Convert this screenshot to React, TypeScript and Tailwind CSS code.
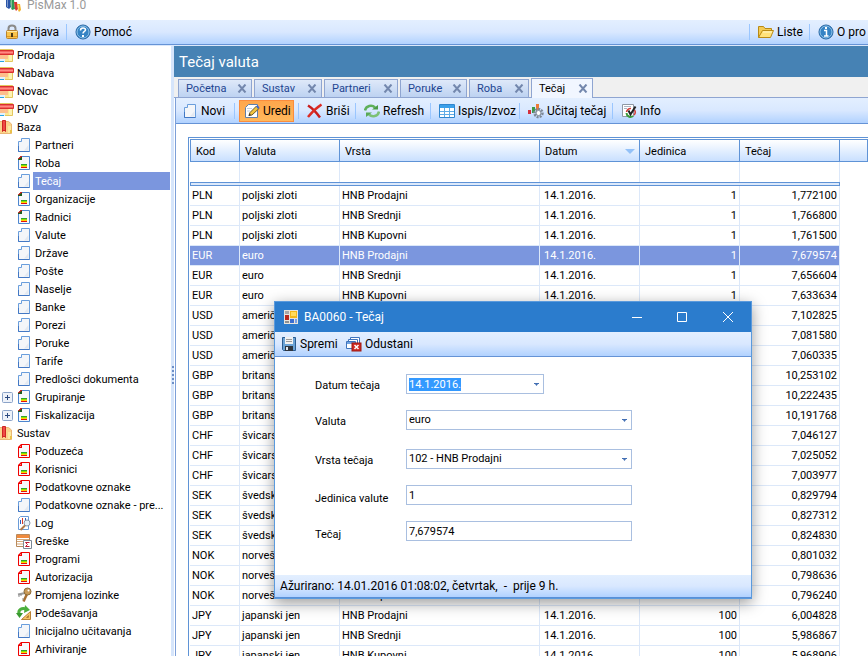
import { useEffect, useRef, useState } from "react";
import type { ReactNode } from "react";
import clsx from "clsx";

type IconKind =
  | "folder"
  | "book"
  | "page"
  | "form"
  | "formRed"
  | "log"
  | "errors"
  | "keys"
  | "settings";

interface TreeItem {
  label: string;
  icon: IconKind;
  level?: number;
  expandable?: boolean;
}

interface Rate {
  code: string;
  currency: string;
  kind: string;
  unit: number;
  value: string;
}

const TREE: TreeItem[] = [
  { label: "Prodaja", icon: "folder" },
  { label: "Nabava", icon: "folder" },
  { label: "Novac", icon: "folder" },
  { label: "PDV", icon: "folder" },
  { label: "Baza", icon: "book" },
  { label: "Partneri", icon: "page", level: 1 },
  { label: "Roba", icon: "form", level: 1 },
  { label: "Tečaj", icon: "page", level: 1 },
  { label: "Organizacije", icon: "form", level: 1 },
  { label: "Radnici", icon: "form", level: 1 },
  { label: "Valute", icon: "page", level: 1 },
  { label: "Države", icon: "page", level: 1 },
  { label: "Pošte", icon: "page", level: 1 },
  { label: "Naselje", icon: "page", level: 1 },
  { label: "Banke", icon: "page", level: 1 },
  { label: "Porezi", icon: "page", level: 1 },
  { label: "Poruke", icon: "page", level: 1 },
  { label: "Tarife", icon: "page", level: 1 },
  { label: "Predlošci dokumenta", icon: "page", level: 1 },
  { label: "Grupiranje", icon: "form", level: 1, expandable: true },
  { label: "Fiskalizacija", icon: "form", level: 1, expandable: true },
  { label: "Sustav", icon: "book" },
  { label: "Poduzeća", icon: "formRed", level: 1 },
  { label: "Korisnici", icon: "formRed", level: 1 },
  { label: "Podatkovne oznake", icon: "formRed", level: 1 },
  { label: "Podatkovne oznake - pre...", icon: "page", level: 1 },
  { label: "Log", icon: "log", level: 1 },
  { label: "Greške", icon: "errors", level: 1 },
  { label: "Programi", icon: "formRed", level: 1 },
  { label: "Autorizacija", icon: "formRed", level: 1 },
  { label: "Promjena lozinke", icon: "keys", level: 1 },
  { label: "Podešavanja", icon: "settings", level: 1 },
  { label: "Inicijalno učitavanja", icon: "page", level: 1 },
  { label: "Arhiviranje", icon: "formRed", level: 1 },
];

const TABS = [
  { label: "Početna", width: "w-[74px]" },
  { label: "Sustav", width: "w-[68px]" },
  { label: "Partneri", width: "w-[74px]" },
  { label: "Poruke", width: "w-[67px]" },
  { label: "Roba", width: "w-[60px]" },
  { label: "Tečaj", width: "w-[62px]" },
];

const KINDS = ["HNB Prodajni", "HNB Srednji", "HNB Kupovni"];

const CURRENCIES: [string, string, number, string[]][] = [
  ["PLN", "poljski zloti", 1, ["1,772100", "1,766800", "1,761500"]],
  ["EUR", "euro", 1, ["7,679574", "7,656604", "7,633634"]],
  ["USD", "američki dolar", 1, ["7,102825", "7,081580", "7,060335"]],
  ["GBP", "britanska funta", 1, ["10,253102", "10,222435", "10,191768"]],
  ["CHF", "švicarski franak", 1, ["7,046127", "7,025052", "7,003977"]],
  ["SEK", "švedska kruna", 1, ["0,829794", "0,827312", "0,824830"]],
  ["NOK", "norveška kruna", 1, ["0,801032", "0,798636", "0,796240"]],
  ["JPY", "japanski jen", 100, ["6,004828", "5,986867", "5,968906"]],
];

const RATES: Rate[] = CURRENCIES.flatMap(([code, currency, unit, values]) =>
  values.map((value, i) => ({ code, currency, kind: KINDS[i], unit, value }))
);

const BAR = "bg-linear-to-b from-[#e3efff] via-[#d9e8ff] to-[#b1d2ff]";

function PageShape() {
  return (
    <>
      <path d="M5.5 1.5H13.5V14.5H2.5V4.5H5.5Z" fill="#f4f6f9" stroke="#6a9edc" />
      <path d="M2.5 9V14.5H13.5" fill="none" stroke="#4378c4" />
      <path d="M8 13.5 12.5 8V13.5Z" fill="#e4e9f1" />
    </>
  );
}

function FormShape({ red }: { red?: boolean }) {
  return (
    <>
      <path
        d="M5.5 1.5H13.5V14.5H2.5V4.5Z"
        fill="#f7f8fa"
        stroke={red ? "#f00000" : "#4d86cf"}
      />
      <path d="M2 5V4L5 1H6V5Z" fill={red ? "#f00000" : "#1c5a1c"} />
      {red ? (
        <path d="M4 4 5 3V4Z" fill="#fff" />
      ) : (
        <path d="M2.5 4V3.5H3.5V2.5H4.5V1.5H6" fill="none" stroke="#d01818" />
      )}
      <path d="M5 9h6v1H5z" fill="#2fa12f" />
      <path d="M5 10h6v1H5z" fill="#8fe000" />
      <path d="M5 11h6v1H5z" fill="#ffd200" />
      <path d="M5 12h6v1H5z" fill="#e01010" />
    </>
  );
}

function TreeIcon({ kind }: { kind: IconKind }) {
  return (
    <svg width="16" height="16" viewBox="0 0 16 16" className="shrink-0" aria-hidden="true">
      {kind === "folder" && (
        <>
          <path d="M-1 2.5H12.5V14.5H-1Z" fill="#fbe98f" stroke="#e3c75f" />
          <path d="M0 8h8v4H0z" fill="#fdbf8c" />
          <path d="M9 8h3v6H9z" fill="#fdf3b4" />
          <path d="M-1 3.5H13.5V7.5H-1Z" fill="#f4615c" stroke="#d92f2f" />
          <path d="M0 5h13v1H0z" fill="#ff8a84" />
          <path d="M0 12h5v3H0z" fill="#e4f1fb" />
          <path d="M0 14h4v1H0z" fill="#28a5e0" />
        </>
      )}
      {kind === "book" && (
        <>
          <path d="M-1 2.5H8.500L11.500 5V14.500H-1Z" fill="#fbd38c" stroke="#eab775" />
          <path d="M8 7h3v7H8z" fill="#fbeaa0" />
          <path d="M2.500 1.500H5.500V12.500L4 11L2.500 12.500Z" fill="#ee4a45" stroke="#cf2622" />
          <path d="M10 11h2v3h-2z" fill="#e9c04a" />
        </>
      )}
      {kind === "page" && <PageShape />}
      {kind === "form" && <FormShape />}
      {kind === "formRed" && <FormShape red />}
      {kind === "log" && (
        <>
          <path d="M4.5 1.5H12.5V14.5H2.5V3.5Z" fill="#fff" stroke="#6a9bd8" />
          <path d="M4 5h1v4H4zM9 3h1v4H9z" fill="#2b5fc0" />
          <path d="M6 3h1v6H6z" fill="#d83a2a" />
          <circle cx="11" cy="8" r="3" fill="#e6f1fa" stroke="#8797a8" />
          <path d="M9 10.500 4.500 15" stroke="#b17a47" strokeWidth="2" />
        </>
      )}
      {kind === "errors" && (
        <>
          <path d="M0.500 1.500H13.500V13.500H0.500Z" fill="#fff" stroke="#b98a5c" />
          <path d="M1 2h12v3H1z" fill="#f08a3c" />
          <path d="M1 6.500H13M1 8.500H13M1 11H13" stroke="#d5a878" />
          <path d="M7.500 7.500H15.500V15.500H7.500Z" fill="#fff" stroke="#7b8794" />
          <path d="M13.500 9.500H9.500L11.500 11.500L9.500 13.500H13.500" fill="none" stroke="#c01830" />
        </>
      )}
      {kind === "keys" && (
        <>
          <path d="M9 6 2 7.500" stroke="#9b9b9b" strokeWidth="2" />
          <path d="M11 7 7.500 14.500" stroke="#a86e31" strokeWidth="2.500" />
          <circle cx="11.500" cy="4.500" r="3.500" fill="#c99a58" stroke="#8a6b3b" />
          <circle cx="12.500" cy="3.500" r="1" fill="#fff" />
          <path d="M3 7.500V10M5 7V9M6 12H8" stroke="#8d8d8d" />
        </>
      )}
      {kind === "settings" && (
        <>
          <path d="M3 9C2 4.500 6 2.500 10 4" fill="none" stroke="#4caf3c" strokeWidth="3" />
          <path d="M9 0 14 5 8 8Z" fill="#4caf3c" />
          <path d="M0 8H7L3.500 13Z" fill="#3a9a30" />
          <path d="M14.500 6.500V14.500H5.500Z" fill="#f6c465" stroke="#b98236" />
          <path d="M12.500 10.500V12.500H10.500Z" fill="#fff" stroke="#b98236" />
        </>
      )}
    </svg>
  );
}

function Svg({ children }: { children: ReactNode }) {
  return (
    <svg width="16" height="16" viewBox="0 0 16 16" className="shrink-0" aria-hidden="true">
      {children}
    </svg>
  );
}

function LockIcon() {
  return (
    <Svg>
      <path d="M4.500 8V4.500C4.500 0.500 11.500 0.500 11.500 4.500V8" fill="none" stroke="#8a8a8a" strokeWidth="2" />
      <rect x="2.500" y="6.500" width="11" height="8" rx="1" fill="#f9c44c" stroke="#b98430" />
      <path d="M3 7.500H13" stroke="#ffe9a6" />
      <path d="M3 12.500H13" stroke="#e59a1f" />
      <path d="M7 9h2v4H7z" fill="#4b3a16" />
    </Svg>
  );
}

function DiscIcon({ sign }: { sign: "help" | "info" }) {
  return (
    <Svg>
      <circle cx="8" cy="8" r="7" fill="#3583c4" stroke="#1f5f9d" />
      <circle cx="8" cy="8" r="6" fill="none" stroke="#8fc3ea" />
      {sign === "help" ? (
        <>
          <path d="M5.500 6.500C5.500 3 10.500 3.500 10.500 6C10.500 7.500 8 7.500 8 9.500" fill="none" stroke="#fff" strokeWidth="1.500" />
          <path d="M7 11h2v2H7z" fill="#fff" />
        </>
      ) : (
        <>
          <path d="M7 3h2v2H7z" fill="#fff" />
          <path d="M6 6.500H8.500V12M6 12H10.500" fill="none" stroke="#fff" strokeWidth="1.500" />
        </>
      )}
    </Svg>
  );
}

function OpenFolderIcon() {
  return (
    <Svg>
      <path d="M0.500 13.500V2.500H5.500L7 4.500H13.500V6.500" fill="#f4cc55" stroke="#b98a14" />
      <path d="M0.500 13.500 4.500 6.500H15.500L12.500 13.500Z" fill="#ffe27a" stroke="#b98a14" />
      <path d="M5 8H14" stroke="#fff6c8" />
    </Svg>
  );
}

function NewIcon() {
  return (
    <Svg>
      <PageShape />
    </Svg>
  );
}

function EditIcon() {
  return (
    <Svg>
      <path d="M4.500 1.500H13.500V14.500H1.500V4.500Z" fill="#fff" stroke="#5f7fa8" />
      <path d="M3 5.500H8M3 8H6" stroke="#c3cfdf" />
      <path d="M5 12.500 6 9.500 12.500 3 15 5.500 8 12Z" fill="#f2c43d" stroke="#6d5a2a" />
      <path d="M12 3.500 13.500 2 15.500 4.500 14 6Z" fill="#4069c9" />
      <path d="M4.500 13 5.500 10.500 7 12Z" fill="#333" />
    </Svg>
  );
}

function DeleteIcon() {
  return (
    <Svg>
      <path d="M1 2.500C5 5 9 9 13 14.500" fill="none" stroke="#c81e1e" strokeWidth="2.500" />
      <path d="M14.500 1.500C9 5 5 9 1 14" fill="none" stroke="#dc2c24" strokeWidth="2.500" />
    </Svg>
  );
}

function RefreshIcon() {
  return (
    <Svg>
      <path d="M1 7.500C2 2.500 8 1.500 11 4.500" fill="none" stroke="#5fb05a" strokeWidth="2.500" />
      <path d="M8 6.500H14V2Z" fill="#4a9c47" />
      <path d="M15 8.500C14 13.500 8 14.500 5 11.500" fill="none" stroke="#7cc174" strokeWidth="2.500" />
      <path d="M8 9.500H2V14Z" fill="#5aa955" />
    </Svg>
  );
}

function TableIcon() {
  return (
    <Svg>
      <path d="M0.500 1.500H15.500V14.500H0.500Z" fill="#fff" stroke="#2f86cf" />
      <path d="M1 2h14v3H1z" fill="#3ba0ea" />
      <path d="M1 8.500H15M1 11.500H15M5.500 5V14M10.500 5V14" stroke="#5fabe6" />
    </Svg>
  );
}

function LoadIcon() {
  return (
    <Svg>
      <path d="M0 7h3v4H0z" fill="#d42f3d" />
      <path d="M4 4h3v6H4z" fill="#3b9a4a" />
      <path d="M8 1h3v6H8z" fill="#ee7a34" />
      <circle cx="10.500" cy="10" r="4" fill="none" stroke="#7d8896" strokeWidth="2.500" strokeDasharray="2 1" />
      <circle cx="10.500" cy="10" r="2.500" fill="#fff" stroke="#7d8896" />
    </Svg>
  );
}

function InfoIcon() {
  return (
    <Svg>
      <path d="M1.500 1.500H12.500V13.500H1.500Z" fill="#fff" stroke="#8f98a4" />
      <path d="M3 3.500H10M3 5.500H6" stroke="#a9b4c2" />
      <path d="M10 5.500A4 4 0 0 0 5.500 9" fill="none" stroke="#d63b36" strokeWidth="1.500" />
      <path d="M5.500 10A4 4 0 0 0 12 13" fill="none" stroke="#3d9b3d" strokeWidth="2" />
      <path d="M13 12A4 4 0 0 0 13.500 7" fill="none" stroke="#d63b36" strokeWidth="1.500" />
      <path d="M7.500 7.500 9.500 11.500 14.500 3.500" fill="none" stroke="#222" strokeWidth="2" />
    </Svg>
  );
}

function SaveIcon() {
  return (
    <Svg>
      <path d="M1.500 1.500H14.500V14.500H2.500L1.500 13.500Z" fill="#6ba3d6" stroke="#2b5c90" />
      <path d="M4 1h8v7H4z" fill="#f2f2f2" />
      <path d="M5 3.500H11M5 5.500H11" stroke="#9a9a9a" />
      <path d="M4 10h8v5H4z" fill="#30363e" />
      <path d="M5 11h2v3H5z" fill="#dfe6ee" />
    </Svg>
  );
}

function CancelIcon() {
  return (
    <Svg>
      <path d="M4.500 1.500H13.500V7.500H4.500Z" fill="#fff" stroke="#3f74bd" />
      <path d="M2.500 3.500H11.500V9.500H2.500Z" fill="#fff" stroke="#3f74bd" />
      <path d="M0.500 5.500H9.500V12.500H0.500Z" fill="#fff" stroke="#3f74bd" />
      <path d="M1 6h8v2H1z" fill="#6ea1e0" />
      <rect x="6" y="7" width="9" height="8" fill="#d02b24" stroke="#9b1813" />
      <path d="M8.500 9 12.500 13M12.500 9 8.500 13" stroke="#fff" strokeWidth="1.500" />
    </Svg>
  );
}

function FormWindowIcon() {
  return (
    <svg width="14" height="14" viewBox="0 0 14 14" aria-hidden="true">
      <path d="M0 0H14V14H0Z" fill="#e8e4dc" />
      <path d="M1 1h4v3H1z" fill="#a8a8a8" />
      <path d="M1 5h4v5H1z" fill="#b8281e" />
      <path d="M6 1h7v7H6z" fill="#f2b81a" />
      <path d="M7 2h5v4H7z" fill="#ffdb5c" />
      <path d="M1 11h4v2H1z" fill="#8f8f8f" />
      <path d="M6 9h4v4H6z" fill="#3a6ed0" />
      <path d="M11 9h2v4h-2z" fill="#7aa0e4" />
    </svg>
  );
}

function Separator() {
  return <span className="mx-1 h-4 w-px shrink-0 bg-[#9ac6ff]" />;
}

function ToolButton({
  icon,
  label,
  className,
}: {
  icon: ReactNode;
  label: string;
  className?: string;
}) {
  return (
    <button
      type="button"
      className={clsx(
        "flex h-[22px] shrink-0 items-center gap-[3px] px-1 text-[12px] whitespace-nowrap",
        className
      )}
    >
      {icon}
      {label}
    </button>
  );
}

function Sidebar() {
  const [selected, setSelected] = useState("Tečaj");

  return (
    <nav className="w-[171px] shrink-0 overflow-hidden text-[11px]">
      <ul>
        {TREE.map((item) => (
          <li key={item.label} className="flex h-[18px] items-center">
            {item.level && (
              <span className="flex w-4 shrink-0 pl-0.5">
                {item.expandable && (
                  <svg width="11" height="11" viewBox="0 0 11 11" aria-hidden="true">
                    <rect x="0.500" y="0.500" width="10" height="10" rx="1" fill="#eef2f9" stroke="#8ba3c8" />
                    <path d="M3 5.500H8M5.500 3V8" stroke="#2c4a80" />
                  </svg>
                )}
              </span>
            )}
            <span className={clsx("flex shrink-0", item.level ? "w-[17px]" : "w-[15px]")}>
              <TreeIcon kind={item.icon} />
            </span>
            <a
              href="#"
              onClick={() => setSelected(item.label)}
              className={clsx(
                "mr-px h-full flex-1 pl-0.5 leading-[20px] whitespace-nowrap",
                selected === item.label && "bg-[#7b96de] text-white"
              )}
            >
              {item.label}
            </a>
          </li>
        ))}
      </ul>
    </nav>
  );
}

function Splitter() {
  return (
    <div className="flex w-[3px] shrink-0 flex-col items-center justify-center gap-0.5 bg-[#d6e5fb] pt-12">
      {[0, 1, 2, 3, 4].map((dot) => (
        <span key={dot} className="size-0.5 bg-[#6d8fc7]" />
      ))}
    </div>
  );
}

function Tabs() {
  const [active, setActive] = useState("Tečaj");

  return (
    <div className="flex h-[21px] items-end gap-0.5 border-b border-[#8fa5d1] bg-[#f0f0f0] pl-1">
      {TABS.map((tab) => {
        const current = tab.label === active;
        return (
          <div
            key={tab.label}
            className={clsx(
              "flex shrink-0 items-center justify-between border border-b-0 border-[#8fa5d1] pr-1 pl-[7px] text-[11px]",
              tab.width,
              current
                ? "-mb-px h-5 bg-[#f1f6ff] text-black"
                : "h-[18px] bg-linear-to-b from-[#dfe9f9] to-[#bdd2f1] text-[#1e4591]"
            )}
          >
            <button type="button" onClick={() => setActive(tab.label)} className="pt-0.5">
              {tab.label}
            </button>
            <button type="button" aria-label={`Zatvori ${tab.label}`}>
              <svg width="10" height="9" viewBox="0 0 10 9" aria-hidden="true">
                <path d="M1.500 0.500 8.500 8.500M8.500 0.500 1.500 8.500" stroke="#7387ad" strokeWidth="2" />
              </svg>
            </button>
          </div>
        );
      })}
    </div>
  );
}

function RatesTable() {
  const head =
    "h-[23px] border-y border-r border-[#5f93d6] bg-linear-to-b from-white to-[#c9e0ff] pt-0.5 pl-[5px] text-left font-normal";
  const cell = "h-5 border-r border-b border-[#dce8f9] pt-px";

  return (
    <table className="w-full table-fixed border-separate border-spacing-0 text-[11px] leading-[14px] whitespace-nowrap">
      <colgroup>
        <col className="w-[50px]" />
        <col className="w-[100px]" />
        <col className="w-[200px]" />
        <col className="w-[100px]" />
        <col className="w-[100px]" />
        <col className="w-[100px]" />
        <col />
      </colgroup>
      <thead>
        <tr>
          <th className={clsx(head, "border-l")}>Kod</th>
          <th className={head}>Valuta</th>
          <th className={head}>Vrsta</th>
          <th className={head}>
            <span className="flex items-center justify-between pr-1">
              Datum
              <svg width="10" height="5" viewBox="0 0 10 5" aria-hidden="true">
                <path d="M0 0H10L5 5Z" fill="#93c1f8" />
              </svg>
            </span>
          </th>
          <th className={head}>Jedinica</th>
          <th className={head}>Tečaj</th>
          <th className={head} />
        </tr>
        <tr>
          {[0, 1, 2, 3, 4, 5].map((column) => (
            <td key={column} className="h-5 border-r border-[#dce8f9]" />
          ))}
          <td />
        </tr>
        <tr>
          <td colSpan={6} className="h-1 border border-[#5f93d6] bg-[#dce9fb] p-0" />
          <td className="p-0" />
        </tr>
      </thead>
      <tbody>
        {RATES.map((rate) => {
          const selected = rate.value === "7,679574";
          return (
            <tr
              key={rate.code + rate.kind}
              className={clsx(selected && "text-white [&>td:not(:last-child)]:bg-[#7b96de]")}
            >
              <td className={clsx(cell, "pl-0.5")}>{rate.code}</td>
              <td className={clsx(cell, "pl-0.5")}>{rate.currency}</td>
              <td className={clsx(cell, "pl-0.5")}>{rate.kind}</td>
              <td className={clsx(cell, "pl-1")}>14.1.2016.</td>
              <td className={clsx(cell, "pr-0.5 text-right")}>{rate.unit}</td>
              <td className={clsx(cell, "pr-0.5 text-right")}>{rate.value}</td>
              <td />
            </tr>
          );
        })}
      </tbody>
    </table>
  );
}

function DropArrow() {
  return (
    <svg
      width="6"
      height="4"
      viewBox="0 0 6 4"
      className="pointer-events-none absolute top-[9px] right-1"
      aria-hidden="true"
    >
      <path d="M0 0H5V1H4L2.500 3L1 1H0Z" fill="#4470b4" />
    </svg>
  );
}

function EditDialog() {
  const dateRef = useRef<HTMLInputElement>(null);
  const field =
    "h-5 w-full appearance-none border border-[#a9bfe0] bg-white px-0.5 text-[11px] leading-[14px] outline-none";
  const label = "w-[91px] shrink-0 pt-0.5 leading-[13px]";

  useEffect(() => {
    dateRef.current?.focus();
    dateRef.current?.select();
  }, []);

  return (
    <section
      role="dialog"
      aria-label="BA0060 - Tečaj"
      className="absolute top-[301px] left-[274px] flex w-[478px] flex-col border border-[#5a9add] bg-white text-[11px] shadow-[0_4px_14px_rgba(0,0,0,0.4)]"
    >
      <header className="flex h-[30px] items-center bg-[#2b7ccd] pl-[9px] text-[12px] text-white">
        <FormWindowIcon />
        <h2 className="flex-1 pl-1.5">BA0060 - Tečaj</h2>
        <button type="button" aria-label="Minimiziraj" className="flex w-[45px] justify-center">
          <svg width="10" height="10" viewBox="0 0 10 10" aria-hidden="true">
            <path d="M0 5.500H10" stroke="#fff" />
          </svg>
        </button>
        <button type="button" aria-label="Maksimiziraj" className="flex w-[45px] justify-center">
          <svg width="10" height="10" viewBox="0 0 10 10" aria-hidden="true">
            <path d="M0.500 0.500H9.500V9.500H0.500Z" fill="none" stroke="#fff" />
          </svg>
        </button>
        <button type="button" aria-label="Zatvori" className="flex w-[47px] justify-center">
          <svg width="10" height="10" viewBox="0 0 10 10" aria-hidden="true">
            <path d="M0 0 10 10M10 0 0 10" stroke="#fff" />
          </svg>
        </button>
      </header>

      <div className={clsx("flex h-[25px] items-center border-b border-[#6593d6] pl-0.5", BAR)}>
        <ToolButton icon={<SaveIcon />} label="Spremi" className="w-[65px]" />
        <ToolButton icon={<CancelIcon />} label="Odustani" />
      </div>

      <form className="flex flex-col gap-4 px-10 pt-[17px] pb-[34px]">
        <div className="flex items-center">
          <label htmlFor="datum" className={label}>
            Datum tečaja
          </label>
          <div className="relative w-[138px]">
            <input
              id="datum"
              ref={dateRef}
              defaultValue="14.1.2016."
              className={clsx(field, "selection:bg-[#3399ff] selection:text-white")}
            />
            <DropArrow />
          </div>
        </div>
        <div className="flex items-center">
          <label htmlFor="valuta" className={label}>
            Valuta
          </label>
          <div className="relative w-[226px]">
            <select id="valuta" className={field}>
              <option>euro</option>
            </select>
            <DropArrow />
          </div>
        </div>
        <div className="flex items-center pt-[3px]">
          <label htmlFor="vrsta" className={label}>
            Vrsta tečaja
          </label>
          <div className="relative w-[226px]">
            <select id="vrsta" className={field}>
              <option>102 - HNB Prodajni</option>
            </select>
            <DropArrow />
          </div>
        </div>
        <div className="flex items-end">
          <label htmlFor="jedinica" className={label}>
            Jedinica valute
          </label>
          <div className="w-[226px]">
            <input id="jedinica" defaultValue="1" className={field} />
          </div>
        </div>
        <div className="flex items-end">
          <label htmlFor="tecaj" className={label}>
            Tečaj
          </label>
          <div className="w-[226px]">
            <input id="tecaj" defaultValue="7,679574" className={field} />
          </div>
        </div>
      </form>

      <footer
        className={clsx(
          "flex h-[23px] items-center border-b border-[#5a8fd6] pl-[5px] text-[12px] whitespace-pre",
          BAR
        )}
      >
        Ažurirano: 14.01.2016 01:08:02, četvrtak,  -  prije 9 h.
      </footer>
    </section>
  );
}

export default function App() {
  return (
    <div className="relative flex h-screen flex-col overflow-hidden bg-white font-[Roboto,'Noto_Sans',sans-serif] text-black">
      <header className="flex h-5 shrink-0 items-start overflow-hidden bg-white pl-[5px]">
        <svg width="16" height="12" viewBox="0 0 16 12" aria-hidden="true">
          <path d="M1 0H5L6 7L4 9L1 7Z" fill="#2a55a8" />
          <path d="M5 0H9L10 9L7 10L6 8Z" fill="#2f9a55" />
          <path d="M9 2H12L13 9L11 11L10 9Z" fill="#d83434" />
          <path d="M12 4H15L16 10L14 12L13 10Z" fill="#f2b32a" />
          <path d="M2 0h1v7H2zM6 0h1v8H6zM13 5h1v5h-1z" fill="#ffffff" opacity="0.4" />
        </svg>
        <h1 className="pl-[6px] text-[12px] leading-[10px] text-[#9a9a9a]">PisMax 1.0</h1>
      </header>

      <div className={clsx("flex h-[25px] shrink-0 items-center border-b border-[#6593d6]", BAR)}>
        <ToolButton icon={<LockIcon />} label="Prijava" className="w-[62px]" />
        <Separator />
        <ToolButton icon={<DiscIcon sign="help" />} label="Pomoć" className="w-[70px]" />
        <div className="ml-auto flex items-center">
          <Separator />
          <ToolButton icon={<OpenFolderIcon />} label="Liste" className="w-[51px]" />
          <Separator />
          <ToolButton icon={<DiscIcon sign="info" />} label="O pro" className="w-[54px]" />
        </div>
      </div>

      <div className="flex min-h-0 flex-1 border-t border-[#dbe8fb]">
        <Sidebar />
        <Splitter />
        <main className="flex min-w-0 flex-1 flex-col">
          <h2 className="h-[31px] shrink-0 bg-[#4682b4] pl-[5px] text-[15px] leading-[32px] text-white">
            Tečaj valuta
          </h2>
          <Tabs />
          <div className="ml-px flex min-h-0 flex-1 flex-col border-l border-[#7d9fd8]">
            <div
              className={clsx("flex h-[26px] shrink-0 items-center border-b border-[#6593d6] pl-0.5", BAR)}
            >
              <ToolButton icon={<NewIcon />} label="Novi" className="w-[52px]" />
              <Separator />
              <ToolButton
                icon={<EditIcon />}
                label="Uredi"
                className="w-[55px] border border-[#fb8c3c] bg-linear-to-b from-[#ffa64c] to-[#ffb85c]"
              />
              <Separator />
              <ToolButton icon={<DeleteIcon />} label="Briši" className="w-[48px]" />
              <Separator />
              <ToolButton icon={<RefreshIcon />} label="Refresh" className="w-[66px]" />
              <Separator />
              <ToolButton icon={<TableIcon />} label="Ispis/Izvoz" className="w-[80px]" />
              <Separator />
              <ToolButton icon={<LoadIcon />} label="Učitaj tečaj" className="w-[84px]" />
              <Separator />
              <ToolButton icon={<InfoIcon />} label="Info" />
            </div>
            <div className="mt-[13px] ml-3 min-h-0 flex-1 overflow-hidden border-t border-l border-[#5f93d6] pt-px pl-px">
              <RatesTable />
            </div>
          </div>
        </main>
      </div>

      <EditDialog />
    </div>
  );
}
